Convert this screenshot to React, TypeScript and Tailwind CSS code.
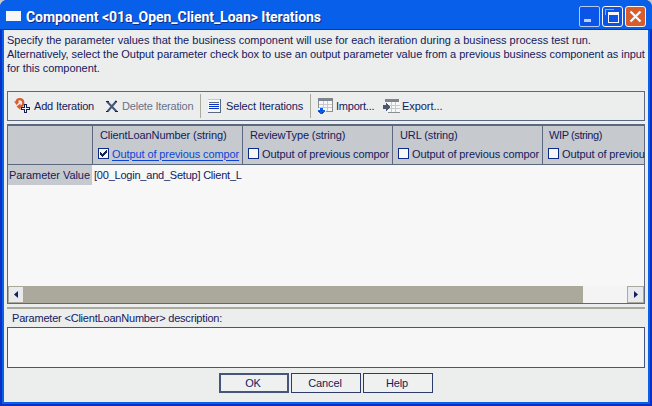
import React from "react";

function Label({ text, className = "", spacing = "tracking-[-0.22px]" }: { text: string; className?: string; spacing?: string }) {
  return <span className={`whitespace-pre ${spacing} ${className}`}>{text}</span>;
}

function AddIcon() {
  return (
    <svg width="16" height="16" viewBox="0 0 16 16" className="shrink-0">
      <path d="M2.500 4Q3 1.200 5.500 1.200Q9.300 1.200 9.300 5Q9.300 7.500 7 8.300L5 8.500" fill="none" stroke="#d85c2c" strokeWidth="2.200" />
      <path d="M0 3.500h5.500L2.700 7ZM2.500 8.500L6.500 5.500V12Z" fill="#d85c2c" />
      <path d="M10 6h3v3h3v3h-3v3h-3v-3H7V9h3z" fill="#13205c" />
      <path d="M11 7h1v3h3v1h-3v3h-1v-3H8v-1h3z" fill="#f7f7f7" />
    </svg>
  );
}

function DeleteIcon() {
  return (
    <svg width="12" height="13" viewBox="0 0 12 13" className="shrink-0">
      <path d="M1 1.500L10.500 11.500M10.500 1L1.500 11.500" fill="none" stroke="#45557b" strokeWidth="2" />
      <path d="M0 1.500h3M9 1.500h2M0 11.500h2M9 11.500h3" stroke="#13205c" />
    </svg>
  );
}

function ListIcon() {
  return (
    <svg width="13" height="14" viewBox="0 0 13 14" className="shrink-0" shapeRendering="crispEdges">
      <path d="M0 0h12v13H0z" fill="#f7f7f7" />
      <path d="M0 0h12v1H0z" fill="#c6c9ce" />
      <path d="M12 0h1v14H0v-1h12z" fill="#5c6780" />
      <path d="M1 3h10v1H1z" fill="#5c6780" />
      <path d="M1 5h10v1H1zM1 7h10v1H1zM1 9h10v1H1z" fill="#0b32c8" />
    </svg>
  );
}

function ImportIcon() {
  return (
    <svg width="16" height="17" viewBox="0 0 16 17" className="shrink-0" shapeRendering="crispEdges">
      <path d="M1 1h14v12H1z" fill="#f7f7f7" />
      <path d="M0 0h15v3H0z" fill="#7f858a" />
      <path d="M0 3h1v7H0zM14 3h1v11H8v-1h6z" fill="#8a8f92" />
      <path d="M5 3h1v7H5zM9 3h1v10H9zM1 6h13v1H1zM1 9h13v1H1z" fill="#c6c9ce" />
      <path d="M2 10h3v2h2v2H6v1H5v1H2v-1H1v-1H0v-2h2z" fill="#075fea" />
      <path d="M3 12h1v1H3zM1 13h1v1H1zM4 14h1v1H4z" fill="#0c2a98" />
    </svg>
  );
}

function ExportIcon() {
  return (
    <svg width="17" height="15" viewBox="0 0 17 15" className="shrink-0" shapeRendering="crispEdges">
      <path d="M4 1h13v12H4z" fill="#f7f7f7" />
      <path d="M2 0h14v3H2z" fill="#7f858a" />
      <path d="M5 13h12v1H5z" fill="#8a8f92" />
      <path d="M8 3h1v10H8zM12 3h1v10h-1zM5 6h12v1H5zM5 9h12v1H5z" fill="#c6c9ce" />
      <path d="M0 6h3V4h1v1h1v1h1v1h1v2H6v1H5v1H4v1H3v-2H0z" fill="#4c566c" />
    </svg>
  );
}

function CheckBox({ checked = false }: { checked?: boolean }) {
  return (
    <span className="h-[11px] w-[11px] shrink-0 border border-[#0c2a86] bg-[#f7f7f7]">
      {checked && (
        <svg width="9" height="9" viewBox="0 0 9 9" shapeRendering="crispEdges">
          <path d="M1 3h1v1h1v1h1v-1h1v-1h1v-1h1v-1h1v3h-1v1h-1v1h-1v1h-1v1h-1v-1h-1v-1h-1z" fill="#13205c" />
        </svg>
      )}
    </span>
  );
}

function Column({ title, option = "Output of previous compor", checked, last }: { title: string; option?: string; checked?: boolean; last?: boolean }) {
  return (
    <div className={`flex shrink-0 flex-col border-l border-[#5c6780] ${last ? "w-[102px]" : "w-[150px]"}`}>
      <div className={`flex h-[18px] items-center ${last ? "pl-[6px] tracking-[-0.4px]" : "pl-[7px] tracking-[-0.1px]"}`}>{title}</div>
      <div className="flex h-[19px] items-center gap-[3px] pl-[5px]">
        <CheckBox checked={checked} />
        <span className={`whitespace-nowrap tracking-[-0.1px] ${checked ? "text-[#0b45d8] underline underline-offset-2" : ""}`}>
          {option}
        </span>
      </div>
    </div>
  );
}

function TitleButtons() {
  return (
    <div className="flex gap-[2px]">
      <div className="flex h-[21px] w-[21px] items-end rounded-[2px] border border-[#b9c8ee] bg-[#0a55e8] pb-[4px] pl-[4px]">
        <span className="h-[3px] w-[7px] bg-[#c6cfe8]" />
      </div>
      <div className="flex h-[21px] w-[21px] items-center justify-center rounded-[3px] border border-[#f7f7f7] bg-[#0a55e8]">
        <svg width="15" height="15" viewBox="0 0 15 15" shapeRendering="crispEdges">
          <path d="M0 0h9v1H1v5H0z" fill="#8faae6" />
          <path d="M3 3h11v11H3zM4 6v7h9V6z" fill="#f7f7f7" fillRule="evenodd" />
        </svg>
      </div>
      <div className="flex h-[21px] w-[21px] items-center justify-center rounded-[3px] border border-[#f7f7f7] bg-[#d85c2c]">
        <svg width="13" height="13" viewBox="0 0 13 13">
          <path d="M1.500 1.500L11.500 11.500M11.500 1.500L1.500 11.500" stroke="#f7f7f7" strokeWidth="2.400" />
        </svg>
      </div>
    </div>
  );
}

export default function App() {
  return (
    <div className="bg-[#c6c9ce]">
      <div className="flex h-[406px] w-[652px] flex-col overflow-hidden rounded-t-[7px] bg-[#0a30c4] font-['Liberation_Sans',Arial,sans-serif] text-[11px] leading-[14px] text-[#13205c]">
        <header className="flex h-[30px] shrink-0 items-center border-b border-[#0838c0] bg-[#075fea] pt-[3px] pl-[6px] pr-[6px]">
          <span className="mr-[5px] h-[10px] w-[15px] bg-[#f7f7f7]" />
          <h1 className="flex-1 whitespace-nowrap pt-[2px] font-['Roboto',sans-serif] text-[14px] font-bold tracking-[-0.05px] text-white [text-shadow:1px_1px_0_#0c2a86]">
            Component &lt;01a_Open_Client_Loan&gt; Iterations
          </h1>
          <TitleButtons />
        </header>

        <main className="mx-[2px] mb-[2px] flex flex-1 flex-col border-x-2 border-b-2 border-[#075fea] bg-[#eceded] px-[3px]">
          <div className="flex h-[61px] shrink-0 flex-col pt-[3px]">
            <Label text="Specify the parameter values that the business component will use for each iteration during a business process test run." spacing="tracking-[0px]" />
            <Label text="Alternatively, select the Output parameter check box to use an output parameter value from a previous business component as input" spacing="tracking-[-0.04px]" />
            <Label text="for this component." spacing="tracking-[-0.04px]" />
          </div>

          <div className="flex h-[30px] shrink-0 items-center border border-[#5c6780] pl-[6px]">
            <AddIcon />
            <Label text="Add Iteration" className="ml-[4px] w-[72px]" spacing="tracking-[-0.18px]" />
            <DeleteIcon />
            <Label text="Delete Iteration" className="ml-[4px] w-[78px] text-[#68718a]" spacing="tracking-[-0.2px]" />
            <span className="h-[24px] w-px bg-[#aaa99c]" />
            <span className="w-[7px]" />
            <ListIcon />
            <Label text="Select Iterations" className="ml-[5px] w-[84px]" spacing="tracking-[-0.1px]" />
            <span className="h-[24px] w-px bg-[#aaa99c]" />
            <span className="w-[7px]" />
            <ImportIcon />
            <Label text="Import..." className="ml-[2px] w-[47px]" />
            <ExportIcon />
            <Label text="Export..." className="ml-[2px]" spacing="tracking-[-0.05px]" />
          </div>

          <section className="mt-[3px] flex h-[180px] shrink-0 flex-col border border-t-2 border-[#5c6780] bg-[#f7f7f7]">
            <div className="flex h-[39px] shrink-0 border-b border-[#5c6780] bg-[#c6c9ce]">
              <div className="w-[84px] shrink-0" />
              <Column title="ClientLoanNumber (string)" checked />
              <Column title="ReviewType (string)" />
              <Column title="URL (string)" />
              <Column title="WIP (string)" option="Output of previou" last />
            </div>
            <div className="flex h-[20px] shrink-0 items-center">
              <div className="flex h-[20px] w-[84px] items-center bg-[#c6c9ce] pb-[1px] pl-[1px]">
                <Label text="Parameter Value" spacing="tracking-[-0.05px]" />
              </div>
              <div className="w-[150px] whitespace-nowrap pb-[1px] pl-[2px] tracking-[-0.22px]">
                [00_Login_and_Setup] Client_L
              </div>
            </div>
            <div className="flex-1" />
            <div className="flex h-[17px] shrink-0 bg-[#f4f4f4]">
              <div className="flex w-[16px] items-center justify-center border border-[#aaa99c] bg-[#e8eaed]">
                <svg width="4" height="7" viewBox="0 0 4 7"><path d="M4 0V7L0 3.500Z" fill="#13205c" /></svg>
              </div>
              <div className="w-[559px] bg-[#aaa99c]" />
              <div className="flex-1" />
              <div className="flex w-[17px] items-center justify-center border border-[#aaa99c] bg-[#e8eaed]">
                <svg width="4" height="7" viewBox="0 0 4 7"><path d="M0 0V7L4 3.500Z" fill="#13205c" /></svg>
              </div>
            </div>
          </section>

          <div className="mt-[3px] h-[2px] shrink-0 bg-[#aaa99c]" />
          <div className="flex h-[18px] shrink-0 items-center pl-[5px]">
            <Label text="Parameter <ClientLoanNumber> description:" spacing="tracking-[-0.2px]" />
          </div>
          <div className="h-[41px] shrink-0 border border-[#45557b] bg-[#f7f7f7]" />

          <footer className="mt-[5px] flex gap-[2px] pl-[212px]">
            <button className="h-[20px] w-[70px] border-2 border-[#45557b] bg-[#eff0f0] pr-[2px] tracking-[-0.3px]">OK</button>
            <button className="h-[20px] w-[70px] border border-[#2d3b6c] bg-[#eff0f0] pr-[2px] tracking-[-0.1px]">Cancel</button>
            <button className="h-[20px] w-[70px] border border-[#2d3b6c] bg-[#eff0f0] pr-[2px] tracking-[-0.2px]">Help</button>
          </footer>
        </main>
      </div>
    </div>
  );
}
